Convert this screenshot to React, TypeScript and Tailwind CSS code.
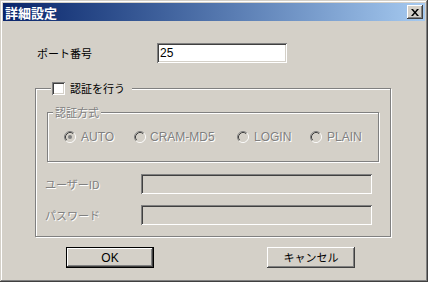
import React from "react";

const sunken =
  "shadow-[inset_1px_1px_0_#808080,inset_-1px_-1px_0_#ffffff,inset_2px_2px_0_#404040,inset_-2px_-2px_0_#d4d0c8]";
const raised =
  "shadow-[inset_-1px_-1px_0_#404040,inset_1px_1px_0_#ffffff,inset_-2px_-2px_0_#808080,inset_2px_2px_0_#d4d0c8]";
const dis = "text-[#808080] [text-shadow:1px_1px_0_#ffffff]";

function Radio({ checked }: { checked?: boolean }) {
  return (
    <svg width="12" height="12" viewBox="0 0 12 12" className="shrink-0">
      <circle cx="6" cy="6" r="5" fill="#d4d0c8" />
      <path d="M2.11 9.89 A5.5 5.5 0 0 1 9.89 2.11" stroke="#808080" fill="none" strokeWidth="1" />
      <path d="M9.89 2.11 A5.5 5.5 0 0 1 2.11 9.89" stroke="#ffffff" fill="none" strokeWidth="1" />
      <path d="M2.82 9.18 A4.5 4.5 0 0 1 9.18 2.82" stroke="#404040" fill="none" strokeWidth="1" />
      <path d="M9.18 2.82 A4.5 4.5 0 0 1 2.82 9.18" stroke="#d4d0c8" fill="none" strokeWidth="1" />
      {checked && <circle cx="6" cy="6" r="2" fill="#808080" />}
    </svg>
  );
}

export default function App() {
  return (
    <div className="w-[428px] h-[282px] bg-[#d4d0c8] p-[3px] flex flex-col shadow-[inset_-1px_-1px_0_#404040,inset_1px_1px_0_#d4d0c8,inset_-2px_-2px_0_#808080,inset_2px_2px_0_#ffffff] font-['Liberation_Sans','Noto_Sans_CJK_JP',sans-serif] text-[12px] text-black leading-none">
      {/* title bar */}
      <div className="h-[18px] flex items-center justify-between bg-gradient-to-r from-[#0a246a] to-[#a6caf0] pl-[2px] pr-[2px]">
        <span className="text-white font-bold text-[13px] font-['Noto_Sans_CJK_JP',sans-serif] tracking-[0px]">詳細設定</span>
        <div className={`w-[16px] h-[14px] bg-[#d4d0c8] flex items-center justify-center ${raised}`}>
          <svg width="8" height="7" viewBox="0 0 8 7">
            <path d="M0 0h2l2 2.5L6 0h2L5 3.5 8 7H6L4 4.5 2 7H0l3-3.5z" fill="#000" />
          </svg>
        </div>
      </div>

      {/* body */}
      <div className="flex flex-col">
        {/* port row */}
        <div className="flex items-center mt-[22px] ml-[34px]">
          <span className="w-[120px] text-[11px] font-['Noto_Sans_CJK_JP',sans-serif]">ポート番号</span>
          <div className={`w-[130px] h-[20px] bg-white flex items-center pl-[3px] text-[12px] ${sunken}`}>25</div>
        </div>

        {/* outer group */}
        <div className="relative mt-[25px] ml-[32px] w-[356px] h-[149px] border border-[#808080] shadow-[1px_1px_0_#ffffff,inset_1px_1px_0_#ffffff] flex flex-col">
          <div className="absolute left-[15px] top-[-7px] h-[13px] bg-[#d4d0c8] flex items-center pl-[1px] pr-[7px] gap-[5px]">
            <div className={`w-[13px] h-[13px] bg-white ${sunken}`} />
            <span className="text-[11px] font-['Noto_Sans_CJK_JP',sans-serif]">認証を行う</span>
          </div>

          {/* inner group */}
          <div className="relative mt-[23px] ml-[11px] w-[332px] h-[50px] border border-[#808080] shadow-[1px_1px_0_#ffffff,inset_1px_1px_0_#ffffff]">
            <div className={`absolute left-[5px] top-[-7px] h-[13px] bg-[#d4d0c8] px-[2px] flex items-center text-[11px] font-['Noto_Sans_CJK_JP',sans-serif] ${dis}`}>
              認証方式
            </div>
            <div className={`flex items-center mt-[18px] pl-[16px] ${dis}`}>
              <div className="w-[70px] flex items-center gap-[5px]">
                <Radio checked />
                <span>AUTO</span>
              </div>
              <div className="w-[103px] flex items-center gap-[4px]">
                <Radio />
                <span>CRAM-MD5</span>
              </div>
              <div className="w-[73px] flex items-center gap-[5px]">
                <Radio />
                <span>LOGIN</span>
              </div>
              <div className="flex items-center gap-[5px]">
                <Radio />
                <span>PLAIN</span>
              </div>
            </div>
          </div>

          <div className="flex items-center mt-[12px] ml-[9px]">
            <span className={`w-[96px] text-[11px] font-['Noto_Sans_CJK_JP',sans-serif] ${dis}`}>ユーザーID</span>
            <div className={`w-[231px] h-[20px] bg-[#d4d0c8] ${sunken}`} />
          </div>
          <div className="flex items-center mt-[11px] ml-[9px]">
            <span className={`w-[96px] text-[11px] font-['Noto_Sans_CJK_JP',sans-serif] ${dis}`}>パスワード</span>
            <div className={`w-[231px] h-[20px] bg-[#d4d0c8] ${sunken}`} />
          </div>
        </div>

        {/* buttons */}
        <div className="flex mt-[10px] ml-[63px]">
          <div className={`w-[88px] h-[21px] border border-black flex items-center justify-center ${raised}`}>OK</div>
          <div className={`ml-[113px] w-[88px] h-[21px] flex items-center justify-center text-[11px] font-['Noto_Sans_CJK_JP',sans-serif] ${raised}`}>
            キャンセル
          </div>
        </div>
      </div>
    </div>
  );
}
